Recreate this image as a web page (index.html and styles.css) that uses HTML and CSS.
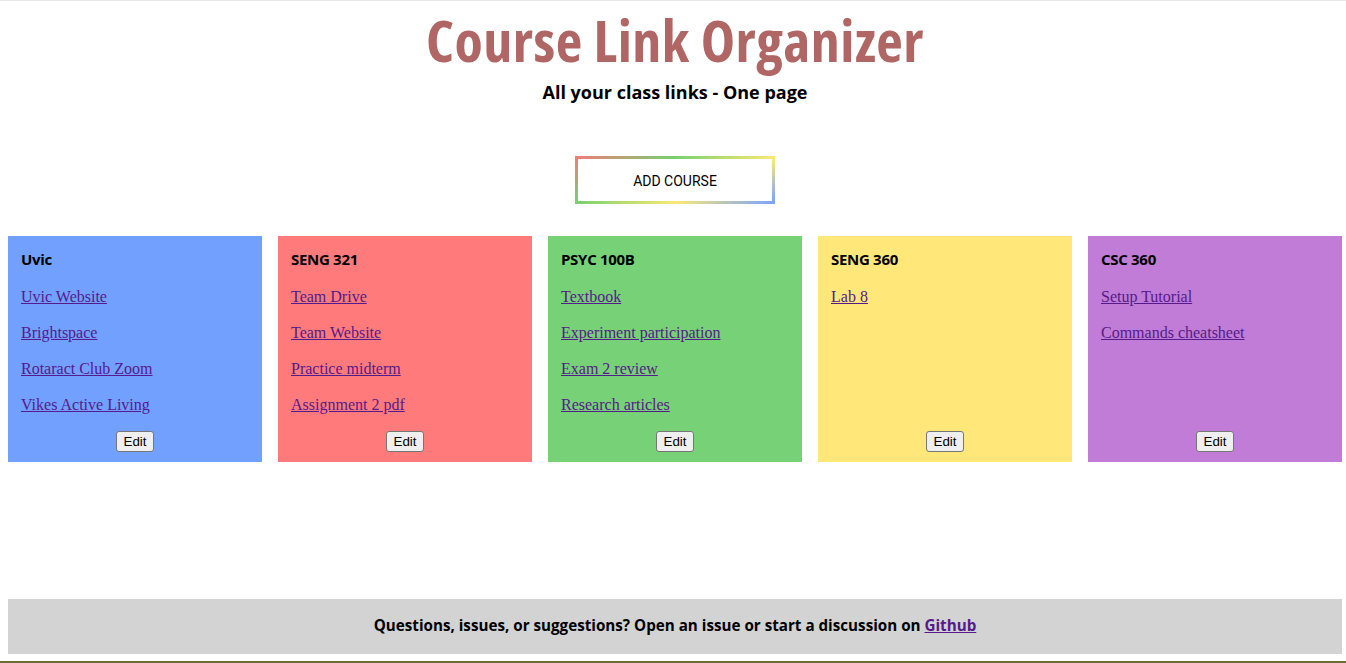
FILE: index.html
```html
<!DOCTYPE html>
<html lang="en">
<head>
<meta charset="utf-8">
<title>Course Link Organizer</title>
<link rel="stylesheet" href="styles.css">
</head>
<body>
<header class="header">
  <h1 class="title">Course Link Organizer</h1>
  <h2 class="subtitle">All your class links - One page</h2>
  <button class="add-btn">ADD COURSE</button>
</header>
<main class="courses">
  <section class="card card-blue">
    <h3 class="card-title">Uvic</h3>
    <div class="links">
      <a href="#">Uvic Website</a>
      <a href="#">Brightspace</a>
      <a href="#">Rotaract Club Zoom</a>
      <a href="#">Vikes Active Living</a>
    </div>
    <div class="card-foot"><button class="edit-btn">Edit</button></div>
  </section>
  <section class="card card-red">
    <h3 class="card-title">SENG 321</h3>
    <div class="links">
      <a href="#">Team Drive</a>
      <a href="#">Team Website</a>
      <a href="#">Practice midterm</a>
      <a href="#">Assignment 2 pdf</a>
    </div>
    <div class="card-foot"><button class="edit-btn">Edit</button></div>
  </section>
  <section class="card card-green">
    <h3 class="card-title">PSYC 100B</h3>
    <div class="links">
      <a href="#">Textbook</a>
      <a href="#">Experiment participation</a>
      <a href="#">Exam 2 review</a>
      <a href="#">Research articles</a>
    </div>
    <div class="card-foot"><button class="edit-btn">Edit</button></div>
  </section>
  <section class="card card-yellow">
    <h3 class="card-title">SENG 360</h3>
    <div class="links">
      <a href="#">Lab 8</a>
    </div>
    <div class="card-foot"><button class="edit-btn">Edit</button></div>
  </section>
  <section class="card card-purple">
    <h3 class="card-title">CSC 360</h3>
    <div class="links">
      <a href="#">Setup Tutorial</a>
      <a href="#">Commands cheatsheet</a>
    </div>
    <div class="card-foot"><button class="edit-btn">Edit</button></div>
  </section>
</main>
<footer class="footer">
  <p>Questions, issues, or suggestions? Open an issue or start a discussion on <a href="#">Github</a></p>
</footer>
</body>
</html>
```

FILE: styles.css
```css
html {
  min-height: 100%;
  background: #ffffff linear-gradient(to bottom, #e8e8e8 0, #e8e8e8 1px, #ffffff 1px, #ffffff calc(100% - 2px), #6f6d2e calc(100% - 2px));
}
body {
  margin: 0;
  padding: 0 4px 0 8px;
  font-family: "Open Sans", "Liberation Sans", sans-serif;
  color: #000;
}
.header {
  display: flex;
  flex-direction: column;
  align-items: center;
  padding-top: 10px;
}
.title {
  margin: 0;
  font-family: "Open Sans", sans-serif;
  font-stretch: 87.5%;
  font-weight: 700;
  font-size: 58px;
  line-height: 60px;
  letter-spacing: 0.5px;
  color: #b06664;
}
.subtitle {
  margin: 10px 0 0;
  font-family: "Open Sans", sans-serif;
  font-weight: 700;
  font-size: 18px;
  line-height: 24px;
}
.add-btn {
  margin-top: 52px;
  width: 200px;
  height: 48px;
  padding: 2px 0 0;
  background: #fff;
  border: 3px solid;
  border-image: linear-gradient(155deg, #f07c78 0%, #77d16f 33%, #fbe874 67%, #7ba3ff 100%) 1;
  font-family: Roboto, "Liberation Sans", sans-serif;
  font-size: 14px;
  color: #000;
  cursor: pointer;
}
.courses {
  margin-top: 32px;
  display: grid;
  grid-template-columns: repeat(5, 1fr);
  gap: 16px;
}
.card {
  height: 226px;
  box-sizing: border-box;
  padding: 14px 13px 10px;
  display: flex;
  flex-direction: column;
}
.card-blue { background: #71a0ff; }
.card-red { background: #ff7b7b; }
.card-green { background: #77d176; }
.card-yellow { background: #ffe879; }
.card-purple { background: #c07cd6; }
.card-title {
  margin: 0;
  font-family: "Open Sans", sans-serif;
  font-weight: 700;
  font-size: 15px;
  line-height: 18px;
  letter-spacing: -0.3px;
}
.links {
  margin-top: 20px;
  display: flex;
  flex-direction: column;
  align-items: flex-start;
  gap: 18px;
}
.links a {
  font-family: "Liberation Serif", serif;
  font-size: 16px;
  line-height: 18px;
  color: #551a8b;
}
.card-foot {
  margin-top: auto;
  display: flex;
  justify-content: center;
}
.edit-btn {
  font-family: "Liberation Sans", Arial, sans-serif;
  font-size: 13.33px;
  height: 21px;
  padding: 1px 7px;
  background: #efefef;
  border: 1px solid #767676;
  border-radius: 3px;
  color: #000;
}
.footer {
  margin-top: 137px;
  height: 55px;
  box-sizing: border-box;
  padding-bottom: 4px;
  background: #d3d3d3;
  display: flex;
  align-items: center;
  justify-content: center;
}
.footer p {
  margin: 0;
  font-family: "Open Sans", sans-serif;
  font-weight: 700;
  font-size: 15.2px;
}
.footer a {
  color: #551a8b;
}
```
